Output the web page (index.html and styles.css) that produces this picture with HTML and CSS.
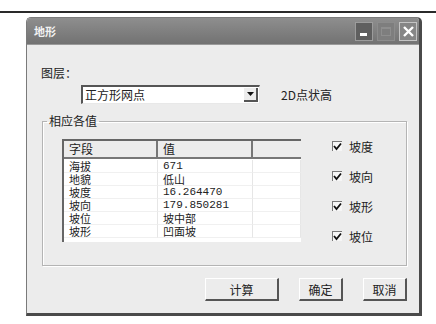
FILE: index.html
```html
<!DOCTYPE html>
<html lang="zh-CN">
<head>
    <meta charset="UTF-8">
    <title>地形</title>
    <link rel="stylesheet" href="styles.css">
</head>
<body>
    <div class="rule"></div>
    <div class="window">
        <div class="titlebar">
            <span class="title">地形</span>
            <div class="caption-btns">
                <span class="cap cap-min"><span class="dash"></span></span>
                <span class="cap cap-max"><span class="box"></span></span>
                <span class="cap cap-close">
                    <svg width="13" height="13" viewBox="0 0 13 13"><path d="M2 2 L11 11 M11 2 L2 11" stroke="#fff" stroke-width="2.4" fill="none"/></svg>
                </span>
            </div>
        </div>
        <div class="win-body">
            <div class="layer-label">图层：</div>
            <div class="layer-row">
                <div class="combo">
                    <span class="combo-text">正方形网点</span>
                    <span class="combo-btn">
                        <svg width="7" height="4" viewBox="0 0 7 4"><path d="M0 0 H7 L3.5 4 Z" fill="#111"/></svg>
                    </span>
                </div>
                <span class="combo-note">2D点状高</span>
            </div>
            <fieldset class="group">
                <legend>相应各值</legend>
                <div class="group-inner">
                    <div class="list">
                        <div class="list-head">
                            <span class="hcell">字段</span>
                            <span class="hcell">值</span>
                            <span class="hcell last"></span>
                        </div>
                        <div class="list-row"><span class="cell">海拔</span><span class="cell num">671</span><span class="cell"></span></div>
                        <div class="list-row"><span class="cell">地貌</span><span class="cell">低山</span><span class="cell"></span></div>
                        <div class="list-row"><span class="cell">坡度</span><span class="cell num">16.264470</span><span class="cell"></span></div>
                        <div class="list-row"><span class="cell">坡向</span><span class="cell num">179.850281</span><span class="cell"></span></div>
                        <div class="list-row"><span class="cell">坡位</span><span class="cell">坡中部</span><span class="cell"></span></div>
                        <div class="list-row"><span class="cell">坡形</span><span class="cell">凹面坡</span><span class="cell"></span></div>
                    </div>
                    <div class="checks">
                        <label class="check"><span class="tick"><svg width="9" height="9" viewBox="0 0 9 9"><path d="M1 4 L3.5 7 L8 1.5" stroke="#111" stroke-width="1.8" fill="none"/></svg></span>坡度</label>
                        <label class="check"><span class="tick"><svg width="9" height="9" viewBox="0 0 9 9"><path d="M1 4 L3.5 7 L8 1.5" stroke="#111" stroke-width="1.8" fill="none"/></svg></span>坡向</label>
                        <label class="check"><span class="tick"><svg width="9" height="9" viewBox="0 0 9 9"><path d="M1 4 L3.5 7 L8 1.5" stroke="#111" stroke-width="1.8" fill="none"/></svg></span>坡形</label>
                        <label class="check"><span class="tick"><svg width="9" height="9" viewBox="0 0 9 9"><path d="M1 4 L3.5 7 L8 1.5" stroke="#111" stroke-width="1.8" fill="none"/></svg></span>坡位</label>
                    </div>
                </div>
            </fieldset>
            <div class="actions">
                <button class="btn btn-wide">计算</button>
                <button class="btn">确定</button>
                <button class="btn">取消</button>
            </div>
        </div>
    </div>
</body>
</html>
```
FILE: styles.css
```css
body {
    margin: 0;
    background: #fff;
    font-family: "Noto Sans CJK SC", "Liberation Sans", sans-serif;
    font-size: 12px;
    color: #222;
}
.rule {
    height: 2px;
    margin-top: 11px;
    background: #2a2a2a;
}
.window {
    box-sizing: border-box;
    width: 396px;
    height: 299px;
    margin: 4px 0 0 26px;
    background: #ececec;
    border: 1px solid #7a7a7a;
    border-right: 3px solid #4a4a4a;
    border-bottom: 3px solid #4a4a4a;
    border-radius: 5px 5px 0 0;
    overflow: hidden;
}
.titlebar {
    height: 26px;
    display: flex;
    align-items: center;
    justify-content: space-between;
    padding: 0 2px 0 7px;
    background: linear-gradient(#8e8e8e, #727272);
    border-bottom: 1px solid #9a9a9a;
}
.title {
    color: #f2f2f2;
    font-size: 11px;
    font-weight: bold;
}
.caption-btns {
    display: flex;
    gap: 4px;
}
.cap {
    box-sizing: border-box;
    width: 18px;
    height: 19px;
    display: flex;
    align-items: center;
    justify-content: center;
    border: 1px solid #9c9c9c;
}
.cap-min {
    background: #5f5f5f;
    align-items: flex-end;
    justify-content: flex-start;
    padding: 0 0 4px 4px;
}
.cap-min .dash {
    width: 7px;
    height: 3px;
    background: #fff;
}
.cap-max {
    background: #7e7e7e;
    border-color: #8c8c8c;
}
.cap-max .box {
    width: 8px;
    height: 6px;
    border: 1px solid #8e8e8e;
    border-top-width: 2px;
}
.cap-close {
    background: #868686;
    border-color: #c4c4c4;
}
.win-body {
    padding: 21px 12px 0 14px;
}
.layer-label {
    height: 14px;
    line-height: 14px;
}
.layer-row {
    display: flex;
    align-items: center;
    margin: 5px 0 0 40px;
}
.combo {
    box-sizing: border-box;
    width: 179px;
    height: 19px;
    display: flex;
    align-items: center;
    justify-content: space-between;
    background: #fff;
    border: 2px solid #555;
    border-right: 1px solid #e8e8e8;
    border-bottom: 1px solid #e8e8e8;
}
.combo-text {
    padding-left: 2px;
    line-height: 14px;
}
.combo-btn {
    box-sizing: border-box;
    width: 14px;
    height: 14px;
    margin-right: 1px;
    display: flex;
    align-items: center;
    justify-content: center;
    background: #ececec;
    border-right: 2px solid #555;
    border-bottom: 2px solid #555;
}
.combo-note {
    margin-left: 21px;
}
.group {
    box-sizing: border-box;
    width: 365px;
    height: 152px;
    margin: 10px 0 0 1px;
    padding: 0 0 0 19px;
    border: 1px solid #b4b4b4;
    box-shadow: inset 1px 1px 0 #fff, 1px 1px 0 #fff;
}
.group legend {
    padding: 0 2px;
    margin-left: -15px;
    line-height: 14px;
}
.group-inner {
    display: flex;
    padding-top: 11px;
}
.list {
    box-sizing: border-box;
    width: 239px;
    height: 103px;
    background: #fff;
    border-top: 2px solid #666;
    border-left: 2px solid #666;
}
.list-head,
.list-row {
    display: grid;
    grid-template-columns: 94px 95px 1fr;
}
.list-head {
    height: 18px;
    margin-bottom: 1px;
}
.hcell {
    box-sizing: border-box;
    padding-left: 5px;
    line-height: 16px;
    background: #ececec;
    border-right: 2px solid #777;
    border-bottom: 2px solid #777;
}
.hcell.last {
    border-right: none;
}
.list-row {
    height: 13px;
}
.cell {
    box-sizing: border-box;
    padding-left: 5px;
    font-size: 11px;
    line-height: 12px;
    border-right: 1px solid #e6e6e6;
    border-bottom: 1px solid #f0f0f0;
    white-space: nowrap;
}
.cell.num {
    font-family: "Liberation Mono", monospace;
}
.checks {
    display: flex;
    flex-direction: column;
    gap: 16px;
    margin: 0 0 0 31px;
}
.check {
    display: flex;
    align-items: center;
    height: 14px;
}
.tick {
    box-sizing: border-box;
    width: 10px;
    height: 10px;
    margin-right: 7px;
    display: flex;
    align-items: center;
    justify-content: center;
    background: #f6f6f6;
    border-top: 1px solid #777;
    border-left: 1px solid #777;
}
.actions {
    display: flex;
    justify-content: flex-end;
    gap: 20px;
    margin-top: 12px;
}
.btn {
    box-sizing: border-box;
    width: 44px;
    height: 23px;
    padding: 0;
    font-family: "Noto Sans CJK SC", sans-serif;
    font-size: 12px;
    color: #222;
    background: #ececec;
    border: 1px solid #fff;
    border-right: 2px solid #555;
    border-bottom: 2px solid #555;
}
.btn-wide {
    width: 74px;
}
```
